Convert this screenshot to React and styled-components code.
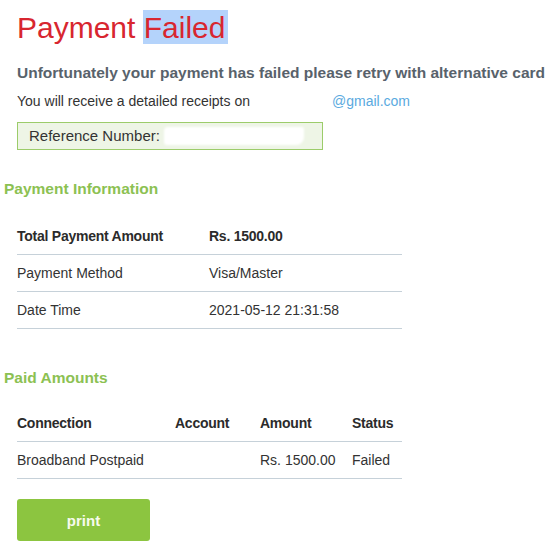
import React from 'react';
import styled, { createGlobalStyle } from 'styled-components';

const GlobalStyle = createGlobalStyle`
  body {
    margin: 0;
    background: #ffffff;
    font-family: "Liberation Sans", Arial, sans-serif;
    color: #333333;
  }
`;

const Page = styled.div`
  padding: 0 0 0 4px;
  width: 555px;
`;

const Block = styled.div`
  margin-left: 13px;
`;

const Title = styled.h1`
  margin: 0;
  padding-top: 10px;
  font-size: 30px;
  line-height: 34px;
  height: 34px;
  font-weight: normal;
  color: #d8262f;
  white-space: nowrap;
`;

const Highlight = styled.span`
  display: inline-block;
  background: #b4d3fb;
  padding: 2px 3px 0 1px;
  line-height: 32px;
  margin-left: -1px;
`;

const Subtitle = styled.p`
  margin: 19px 0 0;
  font-size: 15.5px;
  line-height: 20px;
  font-weight: bold;
  color: #58626b;
  white-space: nowrap;
`;

const Receipt = styled.p`
  margin: 9px 0 0;
  font-size: 14px;
  line-height: 18px;
  color: #333333;
  display: flex;
  align-items: center;
`;

const Redacted = styled.span`
  display: inline-block;
  width: ${(p) => p.w}px;
  height: 16px;
  background: #ffffff;
`;

const Email = styled.span`
  color: #5aaae0;
`;

const RefBox = styled.div`
  margin-top: 12px;
  width: 293px;
  height: 26px;
  border: 1px solid #9ccc6a;
  background: #eef5e6;
  padding-left: 11px;
  box-sizing: content-box;
  display: flex;
  align-items: center;
  font-size: 15px;
  line-height: 26px;
  color: #333333;
  overflow: hidden;
`;

const Scribble = styled.span`
  display: inline-block;
  width: 140px;
  height: 18px;
  margin-left: 4px;
  background: #ffffff;
  border-radius: 4px 2px 8px 3px;
  filter: blur(1px);
`;

const Heading = styled.h2`
  margin: ${(p) => p.top}px 0 0;
  font-size: 15.5px;
  line-height: 20px;
  font-weight: bold;
  color: #8cc152;
`;

const Table = styled.div`
  margin: ${(p) => p.top}px 0 0 13px;
  width: 385px;
`;

const Row = styled.div`
  display: grid;
  grid-template-columns: ${(p) => p.cols};
  height: 36px;
  border-bottom: 1px solid #c6d1d9;
  font-size: 14px;
  line-height: 37px;
  font-weight: ${(p) => (p.bold ? 'bold' : 'normal')};
  letter-spacing: ${(p) => (p.bold ? '-0.25px' : 'normal')};
  color: ${(p) => (p.bold ? '#2b2b2b' : '#333333')};
  box-sizing: content-box;
`;

const Cell = styled.span`
  white-space: nowrap;
`;

const PrintButton = styled.button`
  margin: 20px 0 0 13px;
  width: 133px;
  height: 42px;
  border: none;
  border-radius: 3px;
  background: #8cc540;
  color: #f7fbee;
  font-family: "Liberation Sans", Arial, sans-serif;
  font-size: 15px;
  font-weight: bold;
  cursor: pointer;
`;

const infoCols = '192px 1fr';
const paidCols = '158px 85px 92px 1fr';

export default function App() {
  return (
    <Page>
      <GlobalStyle />
      <Block>
        <Title>
          Payment <Highlight>Failed</Highlight>
        </Title>
        <Subtitle>
          Unfortunately your payment has failed please retry with alternative card
        </Subtitle>
        <Receipt>
          You will receive a detailed receipts on
          <Redacted w={82} />
          <Email>@gmail.com</Email>
        </Receipt>
        <RefBox>
          Reference Number:
          <Scribble />
        </RefBox>
      </Block>

      <Heading top={29}>Payment Information</Heading>
      <Table top={19}>
        <Row cols={infoCols} bold>
          <Cell>Total Payment Amount</Cell>
          <Cell>Rs. 1500.00</Cell>
        </Row>
        <Row cols={infoCols}>
          <Cell>Payment Method</Cell>
          <Cell>Visa/Master</Cell>
        </Row>
        <Row cols={infoCols}>
          <Cell>Date Time</Cell>
          <Cell>2021-05-12 21:31:58</Cell>
        </Row>
      </Table>

      <Heading top={39}>Paid Amounts</Heading>
      <Table top={17}>
        <Row cols={paidCols} bold>
          <Cell>Connection</Cell>
          <Cell>Account</Cell>
          <Cell>Amount</Cell>
          <Cell>Status</Cell>
        </Row>
        <Row cols={paidCols}>
          <Cell>Broadband Postpaid</Cell>
          <Cell />
          <Cell>Rs. 1500.00</Cell>
          <Cell>Failed</Cell>
        </Row>
      </Table>

      <PrintButton>print</PrintButton>
    </Page>
  );
}
